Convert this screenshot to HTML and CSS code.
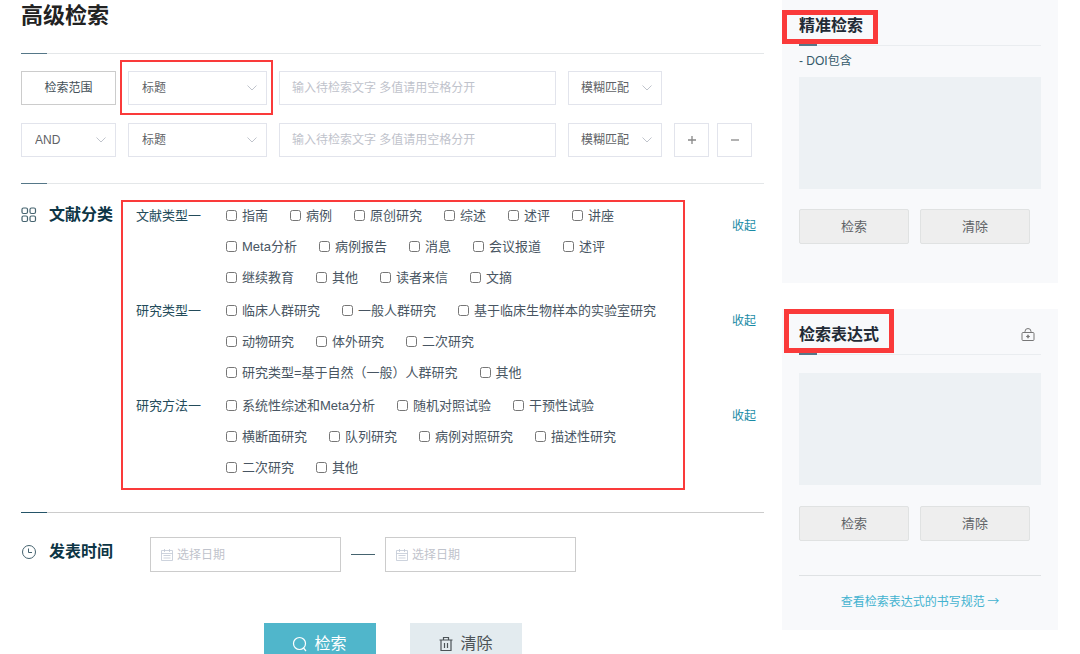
FILE: index.html
```html
<!DOCTYPE html>
<html lang="zh-CN">
<head>
<meta charset="utf-8">
<title>高级检索</title>
<link rel="stylesheet" href="styles.css">
</head>
<body>
<svg class="sprite" aria-hidden="true">
  <symbol id="chevron" viewBox="0 0 12 12"><path d="M1.5 3.5 6 8l4.5-4.5" fill="none" stroke="currentColor"/></symbol>
  <symbol id="calendar" viewBox="0 0 12 12"><path d="M.5 1.5h11v10H.5zM.5 4.5h11M3.5 0v3M8.5 0v3M2.5 6.5h7M2.5 9h7" fill="none" stroke="currentColor" stroke-width=".8"/></symbol>
</svg>
<div class="page">
  <main class="main">
    <h1 class="title">高级检索</h1>
    <form class="search">
      <div class="criteria ruled">
        <div class="row">
          <button type="button" class="field scope">检索范围</button>
          <span class="pick subject marked"><select class="field" aria-label="检索字段"><option>标题</option></select><svg class="chevron"><use href="#chevron"/></svg></span>
          <input class="field query" type="text" aria-label="检索词" placeholder="输入待检索文字 多值请用空格分开">
          <span class="pick match"><select class="field" aria-label="匹配方式"><option>模糊匹配</option></select><svg class="chevron"><use href="#chevron"/></svg></span>
        </div>
        <div class="row">
          <span class="pick logic"><select class="field" aria-label="逻辑关系"><option>AND</option></select><svg class="chevron"><use href="#chevron"/></svg></span>
          <span class="pick subject"><select class="field" aria-label="检索字段"><option>标题</option></select><svg class="chevron"><use href="#chevron"/></svg></span>
          <input class="field query" type="text" aria-label="检索词" placeholder="输入待检索文字 多值请用空格分开">
          <span class="pick match"><select class="field" aria-label="匹配方式"><option>模糊匹配</option></select><svg class="chevron"><use href="#chevron"/></svg></span>
          <div class="steps">
            <button type="button" class="field step" aria-label="添加"><svg width="10" height="10" viewBox="0 0 10 10"><path d="M1 5h8M5 1v8" stroke="currentColor" stroke-width="1.3"/></svg></button>
            <button type="button" class="field step" aria-label="删除"><svg width="10" height="10" viewBox="0 0 10 10"><path d="M1 5h8" stroke="currentColor" stroke-width="1.3"/></svg></button>
          </div>
        </div>
      </div>

      <section class="category ruled">
        <h2 class="heading">
          <svg width="16" height="16" viewBox="0 0 16 16" fill="none" stroke="currentColor" stroke-width="1.2"><rect x="1" y="1" width="5.5" height="5.5" rx="1.5"/><rect x="9" y="1" width="5.5" height="5.5" rx="1.5"/><rect x="1" y="9" width="5.5" height="5.5" rx="1.5"/><rect x="9" y="9" width="5.5" height="5.5" rx="1.5"/></svg>
          文献分类
        </h2>
        <div class="groups">
          <div class="group" role="group" aria-labelledby="g1">
            <span class="name" id="g1">文献类型一</span>
            <div class="options">
              <label><input type="checkbox">指南</label>
              <label><input type="checkbox">病例</label>
              <label><input type="checkbox">原创研究</label>
              <label><input type="checkbox">综述</label>
              <label><input type="checkbox">述评</label>
              <label><input type="checkbox">讲座</label>
              <label><input type="checkbox">Meta分析</label>
              <label><input type="checkbox">病例报告</label>
              <label><input type="checkbox">消息</label>
              <label><input type="checkbox">会议报道</label>
              <label><input type="checkbox">述评</label>
              <label><input type="checkbox">继续教育</label>
              <label><input type="checkbox">其他</label>
              <label><input type="checkbox">读者来信</label>
              <label><input type="checkbox">文摘</label>
            </div>
            <button type="button" class="fold">收起</button>
          </div>
          <div class="group" role="group" aria-labelledby="g2">
            <span class="name" id="g2">研究类型一</span>
            <div class="options">
              <label><input type="checkbox">临床人群研究</label>
              <label><input type="checkbox">一般人群研究</label>
              <label><input type="checkbox">基于临床生物样本的实验室研究</label>
              <label><input type="checkbox">动物研究</label>
              <label><input type="checkbox">体外研究</label>
              <label><input type="checkbox">二次研究</label>
              <label><input type="checkbox">研究类型=基于自然（一般）人群研究</label>
              <label><input type="checkbox">其他</label>
            </div>
            <button type="button" class="fold">收起</button>
          </div>
          <div class="group" role="group" aria-labelledby="g3">
            <span class="name" id="g3">研究方法一</span>
            <div class="options">
              <label><input type="checkbox">系统性综述和Meta分析</label>
              <label><input type="checkbox">随机对照试验</label>
              <label><input type="checkbox">干预性试验</label>
              <label><input type="checkbox">横断面研究</label>
              <label><input type="checkbox">队列研究</label>
              <label><input type="checkbox">病例对照研究</label>
              <label><input type="checkbox">描述性研究</label>
              <label><input type="checkbox">二次研究</label>
              <label><input type="checkbox">其他</label>
            </div>
            <button type="button" class="fold">收起</button>
          </div>
        </div>
      </section>

      <section class="period ruled strong">
        <h2 class="heading">
          <svg width="16" height="16" viewBox="0 0 16 16" fill="none" stroke="currentColor"><circle cx="8" cy="8" r="6.5"/><path d="M7.5 4.5v4H11"/></svg>
          发表时间
        </h2>
        <span class="date"><svg class="calendar"><use href="#calendar"/></svg><input class="field" type="text" aria-label="开始日期" placeholder="选择日期"></span>
        <span class="dash"></span>
        <span class="date"><svg class="calendar"><use href="#calendar"/></svg><input class="field" type="text" aria-label="结束日期" placeholder="选择日期"></span>
      </section>

      <div class="actions">
        <button type="submit" class="action primary"><svg width="16" height="16" viewBox="0 0 16 16" fill="none" stroke="currentColor" stroke-width="1.2"><circle cx="7.5" cy="7.5" r="6"/><path d="m11.5 12 2.5 3"/></svg>检索</button>
        <button type="reset" class="action"><svg width="16" height="16" viewBox="0 0 16 16" fill="none" stroke="currentColor" stroke-width="1.2"><path d="M1.5 4h13M5.5 4V1.500h5V4M3 4v10.500h10V4M6.500 7v5M9.500 7v5"/></svg>清除</button>
      </div>
    </form>
  </main>

  <aside class="side">
    <form class="card">
      <h2 class="card-title"><span class="framed">精准检索</span></h2>
      <label class="hint" for="doi">- DOI包含</label>
      <textarea class="area" id="doi"></textarea>
      <div class="buttons"><button type="submit">检索</button><button type="reset">清除</button></div>
    </form>
    <form class="card expression">
      <h2 class="card-title"><span class="framed">检索表达式</span>
        <svg width="14" height="14" viewBox="0 0 14 14" fill="none" stroke="currentColor"><rect x="1" y="4.5" width="12" height="8" rx="1"/><path d="M4 4.500V3.500a3 3 0 0 1 6 0v1"/><circle cx="7" cy="8.500" r="1.300" fill="currentColor" stroke="none"/><path d="M7 6.500v4M5 8.500h4" stroke-width=".8"/></svg>
      </h2>
      <textarea class="area" aria-label="检索表达式"></textarea>
      <div class="buttons"><button type="submit">检索</button><button type="reset">清除</button></div>
      <div class="guide"><a href="#">查看检索表达式的书写规范 →</a></div>
    </form>
  </aside>
</div>
</body>
</html>
```
FILE: styles.css
```css
* { box-sizing: border-box; }

body {
  margin: 0;
  height: 100vh;
  overflow: hidden;
  background: #fff;
  color: #485562;
  font: 12px/20px "Liberation Sans", "Noto Sans CJK SC", sans-serif;
}

button, input, select, textarea { font: inherit; color: inherit; }
button { padding: 0; cursor: pointer; }
h1, h2 { margin: 0; }
svg { flex: none; }
.sprite { position: absolute; width: 0; height: 0; }

.page {
  display: grid;
  grid-template-columns: minmax(0, 1fr) 276px;
  gap: 18px;
  padding: 0 22px 0 21px;
}

.title {
  height: 53px;
  font-size: 22px;
  line-height: 32px;
  color: #222;
}

/* Divider with a short dark tick at its start */
.ruled {
  border-top: 1px solid #e4e7e9;
  position: relative;
}
.ruled::before {
  content: "";
  position: absolute;
  top: -1px;
  left: 0;
  width: 26px;
  height: 1px;
  background: #557788;
}
.ruled.strong { border-color: #ccc; }
.ruled.strong::before { background: #245468; }

/* Search criteria */
.criteria {
  display: grid;
  gap: 18px;
  padding: 17px 0 26px;
}
.row { display: flex; gap: 12px; }
.field {
  height: 34px;
  border: 1px solid #e2e4ec;
  border-radius: 0;
  background: #fff;
  color: #606266;
}
.field::placeholder { color: #bfc3cc; opacity: 1; }
.scope { width: 95px; border-color: #ccc; color: #435057; }
.pick { position: relative; display: flex; }
.pick .field { width: 100%; padding: 0 13px; appearance: none; }
.logic { width: 95px; }
.subject { width: 139px; }
.match { width: 94px; }
.match .field { padding: 0 12px; }
.query { width: 277px; min-width: 0; padding: 0 12px; }
.chevron {
  position: absolute;
  top: 11px;
  right: 9px;
  width: 12px;
  height: 12px;
  color: #c0c4cc;
  pointer-events: none;
}
.marked::after {
  content: "";
  position: absolute;
  inset: -11px -6px -10px -8px;
  border: 2px solid #fa3a3a;
  pointer-events: none;
}
.steps { display: flex; gap: 8px; }
.step {
  display: grid;
  place-items: center;
  width: 35px;
  color: #888;
}

.heading {
  display: flex;
  align-items: center;
  gap: 12px;
  height: 30px;
  font-size: 16px;
  color: #0c3545;
  white-space: nowrap;
}
.heading svg { color: #45636f; }

/* Category filters */
.category {
  display: grid;
  grid-template-columns: 101px minmax(0, 1fr);
  padding: 16px 0 22px;
}
.groups {
  position: relative;
  display: grid;
  gap: 2px;
  padding: 0 0 7px 14px;
}
.groups::after {
  content: "";
  position: absolute;
  inset: 0 79px 0 -1px;
  border: 2px solid #fa3a3a;
  pointer-events: none;
}
.group {
  display: grid;
  grid-template-columns: 90px minmax(0, 1fr) 32px;
  font-size: 13px;
  line-height: 31px;
}
.name { color: #234b5a; }
.options {
  display: flex;
  flex-wrap: wrap;
  column-gap: 22px;
  padding-right: 48px;
}
.options label {
  display: flex;
  align-items: center;
  gap: 5px;
  white-space: nowrap;
}
.options input { width: 11px; height: 11px; margin: 0; }
.fold {
  align-self: start;
  justify-self: start;
  margin-top: 16px;
  border: 0;
  background: none;
  color: #1a8ba6;
  font-size: 12px;
  line-height: 20px;
}

/* Publication date */
.period {
  display: flex;
  align-items: center;
  gap: 10px;
  padding: 24px 0 51px;
}
.period .heading { align-self: flex-start; width: 119px; }
.date { position: relative; display: flex; width: 191px; }
.date .field { width: 100%; height: 35px; padding: 0 26px; border-color: #ccc; }
.calendar {
  position: absolute;
  top: 12px;
  left: 11px;
  width: 12px;
  height: 12px;
  color: #c0c8d4;
}
.dash { width: 24px; height: 1px; background: #45636f; }

.actions { display: flex; justify-content: center; gap: 34px; }
.action {
  display: flex;
  align-items: center;
  justify-content: center;
  gap: 6px;
  width: 112px;
  height: 41px;
  border: 0;
  background: #e3ebef;
  color: #4c5357;
  font-size: 16px;
}
.action.primary { background: #50b6cb; color: #fff; }

/* Sidebar */
.side { display: grid; align-content: start; gap: 26px; }
.card {
  display: flex;
  flex-direction: column;
  padding: 10px 17px 39px;
  background: #f8f9fb;
}
.card-title {
  position: relative;
  display: flex;
  align-items: center;
  justify-content: space-between;
  height: 36px;
  padding-bottom: 3px;
  border-bottom: 1px solid #eaedf0;
  font-size: 16px;
  color: #222a35;
}
.card-title::before {
  content: "";
  position: absolute;
  left: 0;
  bottom: -1px;
  width: 18px;
  height: 2px;
  background: #557788;
}
.card-title svg { margin-right: 6px; color: #777; }
.framed { position: relative; }
.framed::after {
  content: "";
  position: absolute;
  inset: -6px -15px -8px -17px;
  border: 5px solid #fa3a3a;
}
.hint { padding: 5px 0 6px; color: #34596a; }
.area {
  width: 100%;
  height: 112px;
  border: 0;
  background: #edf1f4;
  resize: none;
}
.buttons { display: flex; gap: 11px; padding: 20px 11px 0 0; }
.buttons button {
  flex: 1;
  height: 35px;
  border: 1px solid #e0e2e2;
  border-radius: 2px;
  background: #eee;
  color: #606266;
  font-size: 13px;
}
.expression { padding-bottom: 18px; }
.expression .area { margin-top: 18px; }
.expression .buttons { padding-top: 21px; }
.expression .framed::after { inset: -16px -15px -8px; }
.guide {
  margin-top: 34px;
  padding-top: 15px;
  border-top: 1px solid #dfe2e4;
  text-align: center;
}
.guide a {
  color: #43b3d0;
  font-family: "Noto Sans CJK SC", sans-serif;
  text-decoration: none;
}
```
